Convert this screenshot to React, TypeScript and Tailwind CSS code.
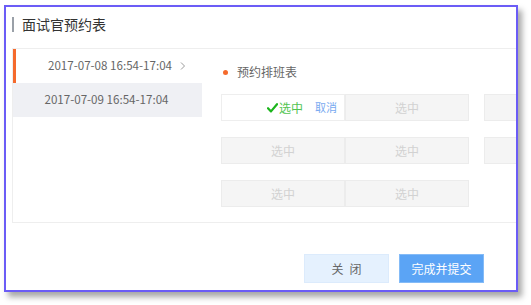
import React from "react";

const font = { fontFamily: '"Noto Sans CJK SC", "Liberation Sans", sans-serif' };

function Cell({ children, active, empty }: { children?: React.ReactNode; active?: boolean; empty?: boolean }) {
  return (
    <div
      className={
        "relative w-[124px] h-[27px] flex items-center justify-center text-[12px] border " +
        (active ? "bg-white border-[#eeeeee]" : "bg-[#f5f5f5] border-[#ececec] text-[#d2d2d2]")
      }
    >
      {empty ? null : children ?? "选中"}
    </div>
  );
}

function Group({ first, hidden }: { first?: boolean; hidden?: boolean }) {
  return (
    <div className="flex">
      {first ? (
        <Cell active>
          <span className="flex items-center text-[#52c452] ml-[4px]">
            <svg width="11" height="10" viewBox="0 0 11 10" className="mr-[1px]">
              <path d="M1 5.2 L4 8.4 L10 1.2" stroke="#1cb51c" strokeWidth="2.2" fill="none" strokeLinecap="round" strokeLinejoin="round" />
            </svg>
            选中
          </span>
          <span className="absolute right-[7px] text-[11px] text-[#78a9f0]">取消</span>
        </Cell>
      ) : (
        <Cell empty={hidden} />
      )}
      <Cell empty={hidden} />
    </div>
  );
}

export default function App() {
  return (
    <div className="w-[531px] h-[305px] bg-white pl-[4px] pt-[5px]" style={font}>
      <div className="w-[514px] h-[287px] border-2 border-[#6b5cf6] overflow-hidden bg-white shadow-[4px_5px_6px_rgba(0,0,0,0.35)] flex flex-col">
        <div className="h-[41px] shrink-0 pl-[6px] pt-[10px] flex items-start">
          <div className="w-[2px] h-[15px] bg-[#9aa0a8]" />
          <div className="ml-[8px] text-[14px] leading-[15px] text-[#333]">面试官预约表</div>
        </div>
        <div className="ml-[6px] w-[620px] h-[175px] shrink-0 border-t border-l border-b border-[#eeeeee] flex">
          <div className="w-[189px] shrink-0 flex flex-col text-[11.6px] text-[#666]">
            <div className="relative h-[34px] flex items-center justify-center border-l-[3px] border-[#f56a2c] pl-[2px]">
              2017-07-08 16:54-17:04
              <svg width="6" height="8" viewBox="0 0 6 8" className="absolute left-[164px] top-[13px]">
                <path d="M1 0.5 L4.5 4 L1 7.5" stroke="#9a9a9a" strokeWidth="1" fill="none" />
              </svg>
            </div>
            <div className="h-[34px] flex items-center justify-center bg-[#eff0f4] pr-[2px]">
              2017-07-09 16:54-17:04
            </div>
          </div>
          <div className="flex-1 pl-[19px] pt-[15px]">
            <div className="h-[16px] flex items-center text-[12px] text-[#666]">
              <span className="w-[5px] h-[5px] rounded-full bg-[#f56a2c] ml-[2px] mr-[9px]" />
              预约排班表
            </div>
            <div className="mt-[14px] flex flex-col gap-[16px]">
              <div className="flex gap-[15px]">
                <Group first />
                <Group hidden />
              </div>
              <div className="flex gap-[15px]">
                <Group />
                <Group hidden />
              </div>
              <div className="flex gap-[15px]">
                <Group />
              </div>
            </div>
          </div>
        </div>
        <div className="flex-1 flex justify-end items-end pb-[7px] pr-[32px] gap-[10px] text-[12px]">
          <button className="w-[85px] h-[29px] bg-[#e5f1fe] border border-[#dcebfc] text-[#666] flex items-center justify-center gap-[6px]">
            <span>关</span>
            <span>闭</span>
          </button>
          <button className="w-[85px] h-[29px] bg-[#5ba4f5] border border-[#84bbf7] text-white">完成并提交</button>
        </div>
      </div>
    </div>
  );
}
